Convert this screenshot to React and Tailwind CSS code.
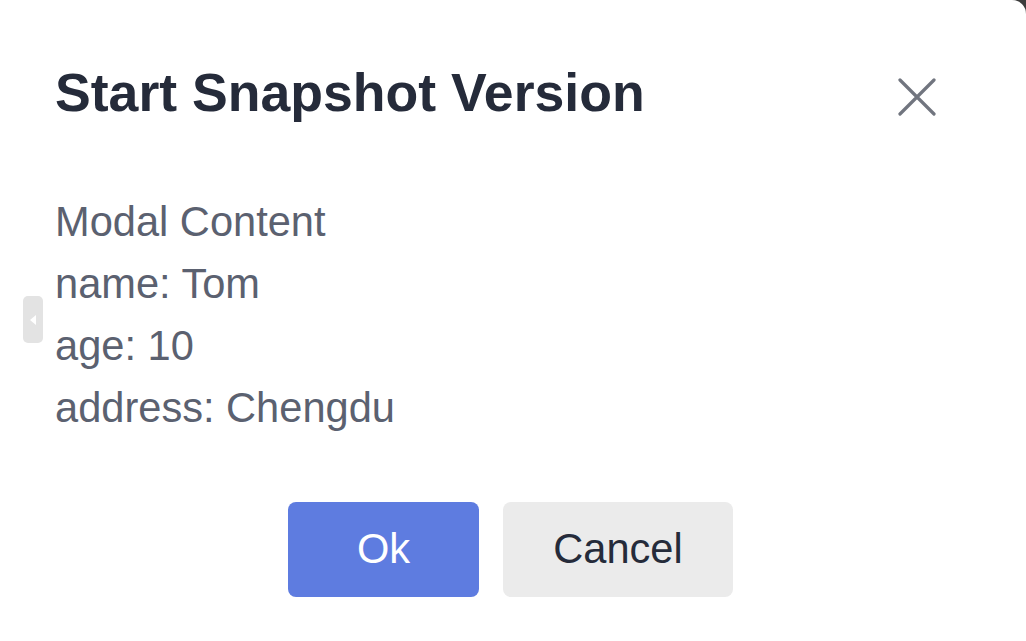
export default function App() {
  return (
    <div className="h-[641px] w-[1026px] overflow-hidden bg-[#3c3c3c]" style={{ fontFamily: '"Liberation Sans", Arial, sans-serif' }}>
      <div className="relative flex h-full w-full flex-col rounded-tr-[14px] bg-white pl-[55px]">
        {/* collapse handle on the left edge */}
        <div className="absolute left-[23px] top-[296px] flex h-[47px] w-[20px] items-center justify-center rounded-[5px] bg-[#e3e3e3]">
          <svg width="10" height="12" viewBox="0 0 10 12">
            <path d="M8 1 L2 6 L8 11 Z" fill="#ffffff" />
          </svg>
        </div>

        {/* header */}
        <div className="mt-[62px] flex items-start justify-between pr-[90px]">
          <h2 className="text-[53.6px] font-bold leading-[60px] text-[#252b3a]">Start Snapshot Version</h2>
          <button className="mt-[16px] flex h-[38px] w-[38px] items-center justify-center">
            <svg width="38" height="38" viewBox="0 0 38 38" fill="none" stroke="#71757f" strokeWidth="3.2" strokeLinecap="round">
              <path d="M2 2 L36 36 M36 2 L2 36" />
            </svg>
          </button>
        </div>

        {/* body */}
        <div className="mt-[69px] text-[41.6px] leading-[62px] text-[#5b6170]">
          <div>Modal Content</div>
          <div>name: Tom</div>
          <div>age: 10</div>
          <div>address: Chengdu</div>
        </div>

        {/* footer */}
        <div className="mt-[63px] flex justify-center gap-[24px] pr-[60px]">
          <button className="flex h-[95px] w-[191px] items-center justify-center rounded-[8px] bg-[#5e7ce0] text-[41.6px] text-white">
            Ok
          </button>
          <button className="flex h-[95px] w-[230px] items-center justify-center rounded-[8px] bg-[#ebebeb] text-[41.6px] text-[#252b3a]">
            Cancel
          </button>
        </div>
      </div>
    </div>
  );
}
